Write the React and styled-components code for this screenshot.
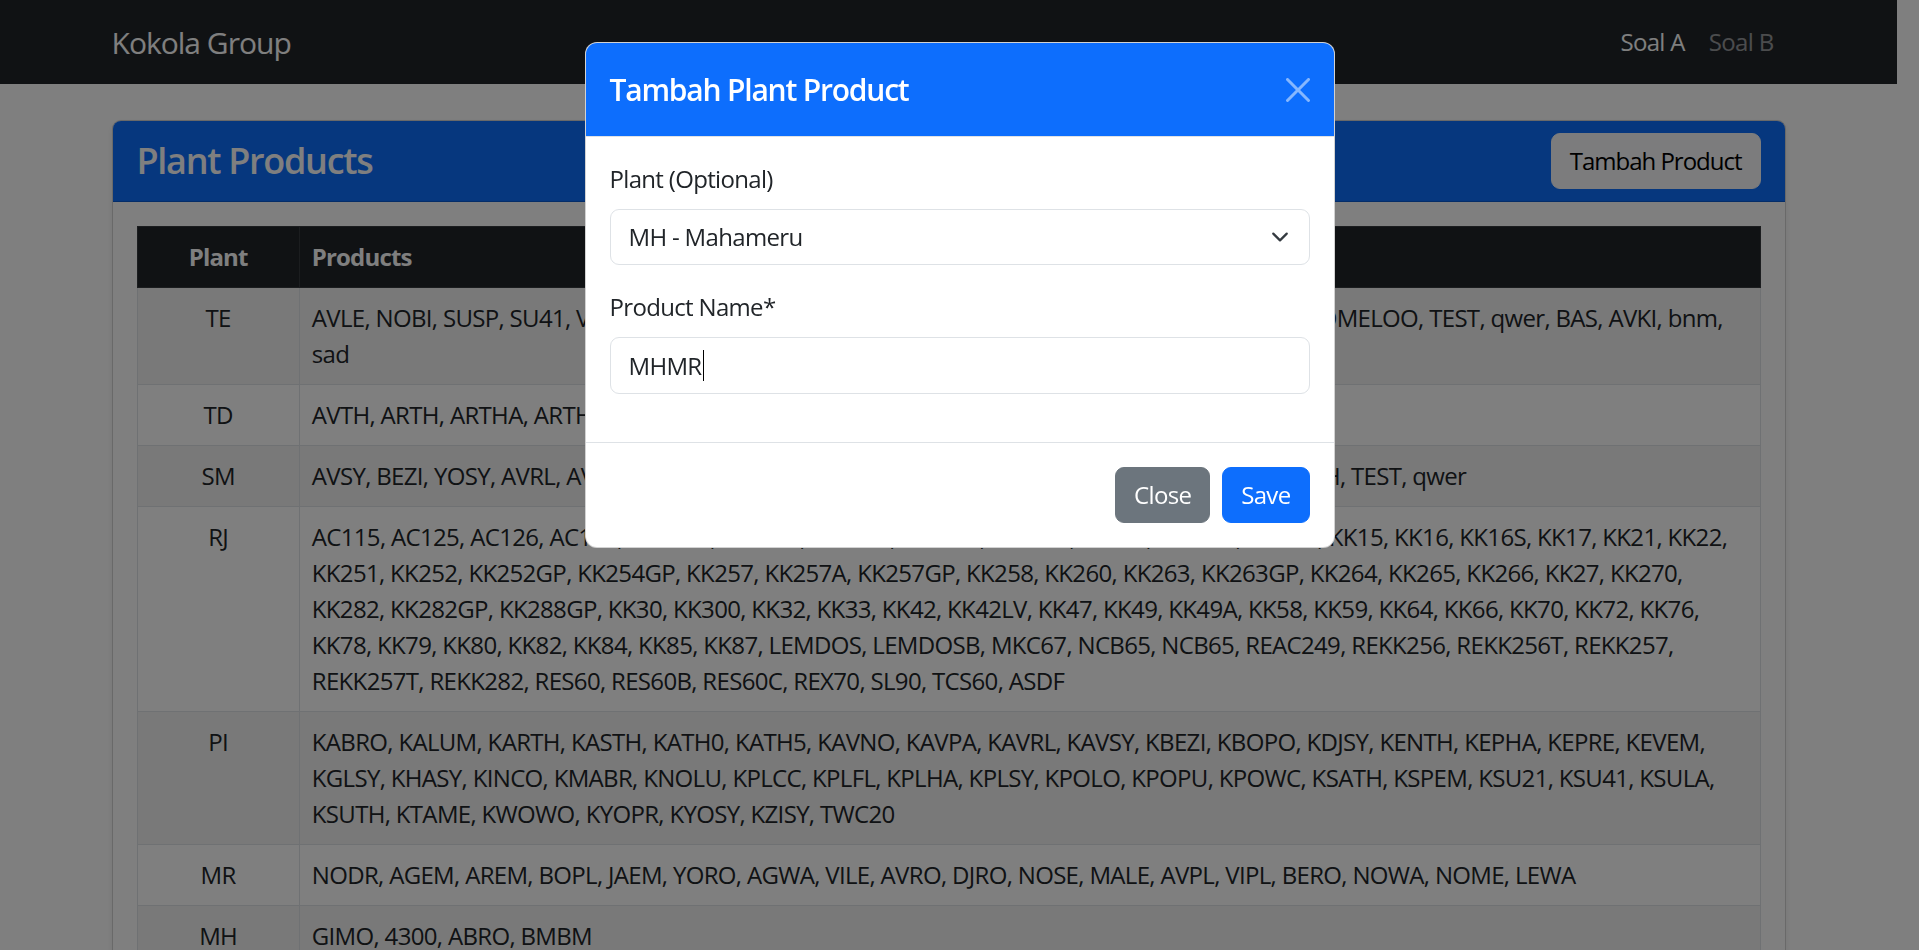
import React from "react";
import styled, { createGlobalStyle } from "styled-components";

const GlobalStyle = createGlobalStyle`
  *, *::before, *::after { box-sizing: border-box; }
  html, body { margin: 0; height: 100%; }
  body {
    font-family: "Open Sans", "Noto Sans", sans-serif;
    font-size: 24px;
    line-height: 1.5;
    letter-spacing: -0.028em;
    color: #212529;
    background: #fff;
    padding-right: 22px;
    overflow: hidden;
  }
`;

const Navbar = styled.nav`
  background: #212529;
  padding: 12px 0;
`;

const Container = styled.div`
  max-width: 1710px;
  margin: ${(p) => (p.$top ? `${p.$top}px auto 0` : "0 auto")};
  padding: 0 18px;
`;

const NavInner = styled(Container)`
  display: flex;
  align-items: center;
  justify-content: space-between;
`;

const Brand = styled.a`
  font-size: 30px;
  line-height: 45px;
  padding: 7.5px 0;
  margin-right: 24px;
  color: #fff;
  letter-spacing: -0.033em;
  text-decoration: none;
`;

const NavLinks = styled.div`
  display: flex;
`;

const NavLink = styled.a`
  display: block;
  padding: 12px;
  color: ${(p) => (p.$active ? "#fff" : "rgba(255,255,255,0.55)")};
  text-decoration: none;
`;

const Card = styled.section`
  background: #fff;
  border: 1px solid rgba(0, 0, 0, 0.175);
  border-radius: 9px;
  box-shadow: 0 3px 6px rgba(0, 0, 0, 0.075);
`;

const CardHeader = styled.header`
  display: flex;
  align-items: center;
  justify-content: space-between;
  background: #0d6efd;
  color: #fff;
  padding: 12px 24px;
  border-bottom: 1px solid rgba(0, 0, 0, 0.175);
  border-radius: 8px 8px 0 0;
`;

const CardTitle = styled.h4`
  margin: 0;
  font-size: 36px;
  font-weight: 600;
  line-height: 1.2;
  letter-spacing: -0.036em;
`;

const Button = styled.button`
  font-family: inherit;
  font-size: 24px;
  line-height: 36px;
  letter-spacing: ${(p) => p.$ls || "inherit"};
  padding: 9px 18px;
  border-radius: 9px;
  border: 1px solid ${(p) => p.$bg};
  background: ${(p) => p.$bg};
  color: ${(p) => p.$fg};
  margin: ${(p) => (p.$gap ? "6px" : "0")};
  cursor: pointer;
`;

const CardBody = styled.div`
  padding: 24px;
`;

const Table = styled.table`
  width: 100%;
  border-collapse: collapse;
  margin-bottom: 24px;
`;

const Th = styled.th`
  background: #212529;
  color: #fff;
  font-weight: 700;
  letter-spacing: -0.035em;
  padding: 12px;
  border: 1px solid #373b3e;
  vertical-align: top;
  text-align: ${(p) => (p.$center ? "center" : "left")};
  width: ${(p) => p.$width || "auto"};
`;

const Row = styled.tr`
  &:nth-of-type(odd) td {
    background: #f2f2f2;
  }
`;

const Td = styled.td`
  padding: 12px;
  border: 1px solid #dee2e6;
  vertical-align: top;
  text-align: ${(p) => (p.$center ? "center" : "left")};
`;

/* ---------- modal ---------- */

const Backdrop = styled.div`
  position: fixed;
  inset: 0;
  background: rgba(0, 0, 0, 0.5);
  z-index: 1050;
`;

const ModalLayer = styled.div`
  position: fixed;
  inset: 0;
  z-index: 1055;
  overflow: hidden;
`;

const Dialog = styled.div`
  width: 750px;
  margin: 42px auto;
`;

const ModalContent = styled.div`
  background: #fff;
  border: 1px solid rgba(0, 0, 0, 0.175);
  border-radius: 12px;
  overflow: hidden;
`;

const ModalHeader = styled.div`
  display: flex;
  align-items: center;
  background: #0d6efd;
  color: #fff;
  padding: 24px;
  border-bottom: 1px solid #dee2e6;
`;

const ModalTitle = styled.h5`
  margin: 0;
  font-size: 30px;
  font-weight: 600;
  line-height: 1.5;
  letter-spacing: -0.04em;
`;

const CloseX = styled.button`
  margin: -12px -6px -12px auto;
  width: 36px;
  height: 36px;
  padding: 6px;
  border: 0;
  background: transparent;
  opacity: 0.5;
  display: flex;
  cursor: pointer;
  svg { width: 24px; height: 24px; }
`;

const ModalBody = styled.div`
  padding: 24px;
`;

const Field = styled.div`
  margin-bottom: 24px;
`;

const Label = styled.label`
  display: block;
  margin-bottom: 12px;
`;

const SelectWrap = styled.div`
  position: relative;
  svg {
    position: absolute;
    right: 18px;
    top: 50%;
    width: 24px;
    height: 18px;
    margin-top: -9px;
    pointer-events: none;
  }
`;

const Select = styled.select`
  appearance: none;
  display: block;
  width: 100%;
  font-family: inherit;
  font-size: 24px;
  line-height: 36px;
  letter-spacing: inherit;
  color: #212529;
  padding: 9px 54px 9px 18px;
  background: #fff;
  border: 1px solid #dee2e6;
  border-radius: 9px;
  outline: none;
`;

const TextBox = styled.div`
  display: flex;
  align-items: center;
  width: 100%;
  padding: 9px 18px;
  min-height: 57px;
  line-height: 36px;
  border: 1px solid #dee2e6;
  border-radius: 9px;
  background: #fff;
`;

const Caret = styled.span`
  display: inline-block;
  width: 1px;
  height: 31px;
  background: #000;
  margin-left: 1px;
`;

const ModalFooter = styled.div`
  display: flex;
  justify-content: flex-end;
  align-items: center;
  padding: 18px;
  border-top: 1px solid #dee2e6;
`;

const rows = [
  {
    plant: "TE",
    products: "AVLE, NOBI, SUSP, SU41, VIPL, BEBO, SUKA, AVRO, DJRO, NOSE, MALE, AVPL, BERO, NOWA, KI, DOMELOO, TEST, qwer, BAS, AVKI, bnm, sad",
  },
  {
    plant: "TD",
    products: "AVTH, ARTH, ARTHA, ARTHB, BOTH, KUTH, SATH, DJTH, NOTH, MATH, TEST, qwer",
  },
  {
    plant: "SM",
    products: "AVSY, BEZI, YOSY, AVRL, AVLE, NOBI, SUSP, SU411, VILE, BERO, NOWA, NOME, LEWA, AGWA, AVTH, TEST, qwer",
  },
  {
    plant: "RJ",
    products:
      "AC115, AC125, AC126, AC130, BB1100, CSE100, CSE214, CSE300, CSE310, CL310, CLZ001, KN400, KK15, KK16, KK16S, KK17, KK21, KK22, KK251, KK252, KK252GP, KK254GP, KK257, KK257A, KK257GP, KK258, KK260, KK263, KK263GP, KK264, KK265, KK266, KK27, KK270, KK282, KK282GP, KK288GP, KK30, KK300, KK32, KK33, KK42, KK42LV, KK47, KK49, KK49A, KK58, KK59, KK64, KK66, KK70, KK72, KK76, KK78, KK79, KK80, KK82, KK84, KK85, KK87, LEMDOS, LEMDOSB, MKC67, NCB65, NCB65, REAC249, REKK256, REKK256T, REKK257, REKK257T, REKK282, RES60, RES60B, RES60C, REX70, SL90, TCS60, ASDF",
  },
  {
    plant: "PI",
    products:
      "KABRO, KALUM, KARTH, KASTH, KATH0, KATH5, KAVNO, KAVPA, KAVRL, KAVSY, KBEZI, KBOPO, KDJSY, KENTH, KEPHA, KEPRE, KEVEM, KGLSY, KHASY, KINCO, KMABR, KNOLU, KPLCC, KPLFL, KPLHA, KPLSY, KPOLO, KPOPU, KPOWC, KSATH, KSPEM, KSU21, KSU41, KSULA, KSUTH, KTAME, KWOWO, KYOPR, KYOSY, KZISY, TWC20",
  },
  {
    plant: "MR",
    products: "NODR, AGEM, AREM, BOPL, JAEM, YORO, AGWA, VILE, AVRO, DJRO, NOSE, MALE, AVPL, VIPL, BERO, NOWA, NOME, LEWA",
  },
  { plant: "MH", products: "GIMO, 4300, ABRO, BMBM" },
  { plant: "KB", products: "KBAB, KBAC, KBAD" },
];

export default function App() {
  return (
    <>
      <GlobalStyle />
      <Navbar>
        <NavInner>
          <Brand href="#">Kokola Group</Brand>
          <NavLinks>
            <NavLink $active href="#">Soal A</NavLink>
            <NavLink href="#">Soal B</NavLink>
          </NavLinks>
        </NavInner>
      </Navbar>

      <Container $top={36}>
        <Card>
          <CardHeader>
            <CardTitle>Plant Products</CardTitle>
            <Button $bg="#f8f9fa" $fg="#000" $ls="-0.042em">Tambah Product</Button>
          </CardHeader>
          <CardBody>
            <Table>
              <thead>
                <tr>
                  <Th $center $width="10%">Plant</Th>
                  <Th>Products</Th>
                </tr>
              </thead>
              <tbody>
                {rows.map((r) => (
                  <Row key={r.plant}>
                    <Td $center>{r.plant}</Td>
                    <Td>{r.products}</Td>
                  </Row>
                ))}
              </tbody>
            </Table>
          </CardBody>
        </Card>
      </Container>

      <Backdrop />
      <ModalLayer>
        <Dialog role="dialog" aria-modal="true">
          <ModalContent>
            <ModalHeader>
              <ModalTitle>Tambah Plant Product</ModalTitle>
              <CloseX aria-label="Close">
                <svg viewBox="0 0 16 16" fill="#fff">
                  <path d="M.293.293a1 1 0 0 1 1.414 0L8 6.586 14.293.293a1 1 0 1 1 1.414 1.414L9.414 8l6.293 6.293a1 1 0 0 1-1.414 1.414L8 9.414l-6.293 6.293a1 1 0 0 1-1.414-1.414L6.586 8 .293 1.707a1 1 0 0 1 0-1.414z" />
                </svg>
              </CloseX>
            </ModalHeader>
            <ModalBody>
              <Field>
                <Label htmlFor="plant">Plant (Optional)</Label>
                <SelectWrap>
                  <Select id="plant" defaultValue="MH">
                    <option value="">-- Pilih Plant --</option>
                    <option value="TE">TE - Tegal</option>
                    <option value="MH">MH - Mahameru</option>
                  </Select>
                  <svg viewBox="0 0 16 16" fill="none" stroke="#343a40" strokeWidth="2" strokeLinecap="round" strokeLinejoin="round">
                    <path d="m2 5 6 6 6-6" />
                  </svg>
                </SelectWrap>
              </Field>
              <Field>
                <Label>Product Name*</Label>
                <TextBox role="textbox">
                  MHMR
                  <Caret />
                </TextBox>
              </Field>
            </ModalBody>
            <ModalFooter>
              <Button $gap $bg="#6c757d" $fg="#fff">Close</Button>
              <Button $gap $bg="#0d6efd" $fg="#fff">Save</Button>
            </ModalFooter>
          </ModalContent>
        </Dialog>
      </ModalLayer>
    </>
  );
}
